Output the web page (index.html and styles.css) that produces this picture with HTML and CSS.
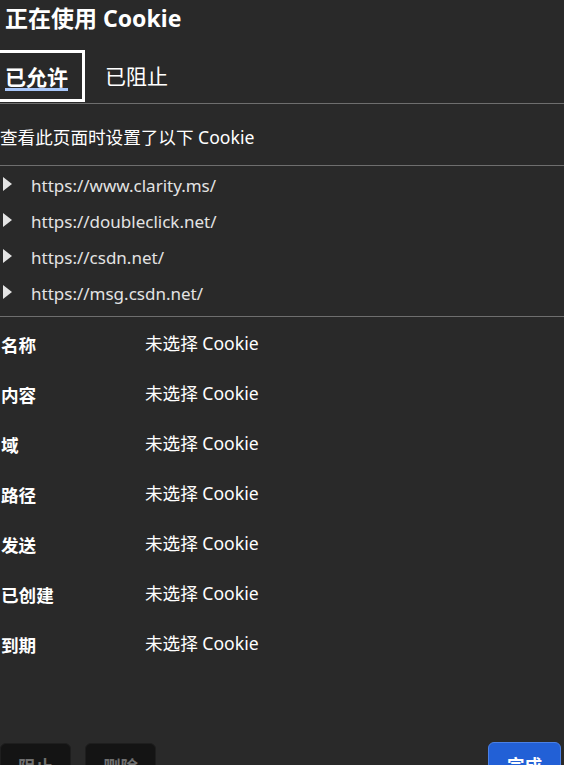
FILE: index.html
```html
<!DOCTYPE html>
<html lang="zh-CN">
<head>
<meta charset="utf-8">
<link rel="stylesheet" href="styles.css">
</head>
<body>
<h1 class="title">正在使用 Cookie</h1>
<div class="tabs">
  <div class="tab tab-active"><span class="tab-label">已允许</span></div>
  <div class="tab">已阻止</div>
</div>
<div class="desc">查看此页面时设置了以下 Cookie</div>
<ul class="tree">
  <li class="tree-item"><span class="arrow"></span><span class="url">https://www.clarity.ms/</span></li>
  <li class="tree-item"><span class="arrow"></span><span class="url">https://doubleclick.net/</span></li>
  <li class="tree-item"><span class="arrow"></span><span class="url">https://csdn.net/</span></li>
  <li class="tree-item"><span class="arrow"></span><span class="url">https://msg.csdn.net/</span></li>
</ul>
<div class="details">
  <div class="row"><span class="label">名称</span><span class="value">未选择 Cookie</span></div>
  <div class="row"><span class="label">内容</span><span class="value">未选择 Cookie</span></div>
  <div class="row"><span class="label">域</span><span class="value">未选择 Cookie</span></div>
  <div class="row"><span class="label">路径</span><span class="value">未选择 Cookie</span></div>
  <div class="row"><span class="label">发送</span><span class="value">未选择 Cookie</span></div>
  <div class="row"><span class="label">已创建</span><span class="value">未选择 Cookie</span></div>
  <div class="row"><span class="label">到期</span><span class="value">未选择 Cookie</span></div>
</div>
<div class="actions">
  <button class="btn btn-dark">阻止</button>
  <button class="btn btn-dark">删除</button>
  <span class="spacer"></span>
  <button class="btn btn-primary">完成</button>
</div>
</body>
</html>
```
FILE: styles.css
```css
html, body {
  margin: 0;
  padding: 0;
  background: #292929;
  color: #ffffff;
  font-family: "Noto Sans", "Noto Sans CJK SC", sans-serif;
  overflow: hidden;
}
body {
  width: 564px;
  height: 765px;
}
.title {
  margin: 0;
  padding: 3px 0 0 5px;
  font-size: 23px;
  line-height: 30px;
  font-weight: 700;
  height: 46px;
  box-sizing: border-box;
}
.tabs {
  margin-top: 4px;
  display: flex;
  align-items: stretch;
  border-bottom: 1px solid #6e6e6e;
  height: 54px;
  box-sizing: border-box;
  padding-bottom: 1px;
}
.tab {
  display: flex;
  align-items: center;
  font-size: 21px;
  line-height: 24px;
  padding: 0 0 0 20px;
  color: #ffffff;
}
.tab-active {
  margin-left: -3px;
  border: 3px solid #ffffff;
  padding: 0 14px 0 5px;
  font-weight: 700;
}
.tab-label {
  border-bottom: 3px solid #a8c7fa;
  line-height: 22px;
  margin-top: 4px;
}
.desc {
  height: 62px;
  display: flex;
  align-items: center;
  font-size: 17.6px;
  padding-top: 3px;
  border-bottom: 1px solid #6e6e6e;
  box-sizing: border-box;
}
.tree {
  list-style: none;
  margin: 0;
  padding: 0 0 6px 0;
  border-bottom: 1px solid #6e6e6e;
}
.tree-item {
  height: 36px;
  display: flex;
  align-items: center;
  font-size: 17px;
  color: #e3e3e3;
}
.arrow {
  width: 0;
  height: 0;
  margin-left: 3px;
  border-top: 7px solid transparent;
  border-bottom: 7px solid transparent;
  border-left: 9px solid #e3e3e3;
}
.url {
  margin-left: 19px;
  padding-top: 3px;
}
.details {
  display: flex;
  flex-direction: column;
}
.row {
  height: 50px;
  display: flex;
  align-items: center;
  font-size: 17.6px;
}
.label {
  width: 144px;
  padding-left: 1px;
  font-weight: 700;
  padding-top: 4px;
}
.value {
  color: #ffffff;
}
.actions {
  margin-top: 76px;
  display: flex;
  align-items: flex-start;
  padding-right: 3px;
}
.btn {
  font-family: "Noto Sans", "Noto Sans CJK SC", sans-serif;
  font-size: 17.6px;
  height: 44px;
  border-radius: 6px;
  padding: 0 14px;
  font-weight: 700;
}
.btn-dark {
  background: #141414;
  color: #6f6f6f;
  border: 1px solid #1e1e1e;
  width: 71px;
  margin-right: 14px;
}
.spacer {
  flex: 1;
}
.btn-primary {
  background: #2260d6;
  color: #ffffff;
  border: 1px solid #4a80e6;
  width: 73px;
  margin-top: -1px;
}
```
